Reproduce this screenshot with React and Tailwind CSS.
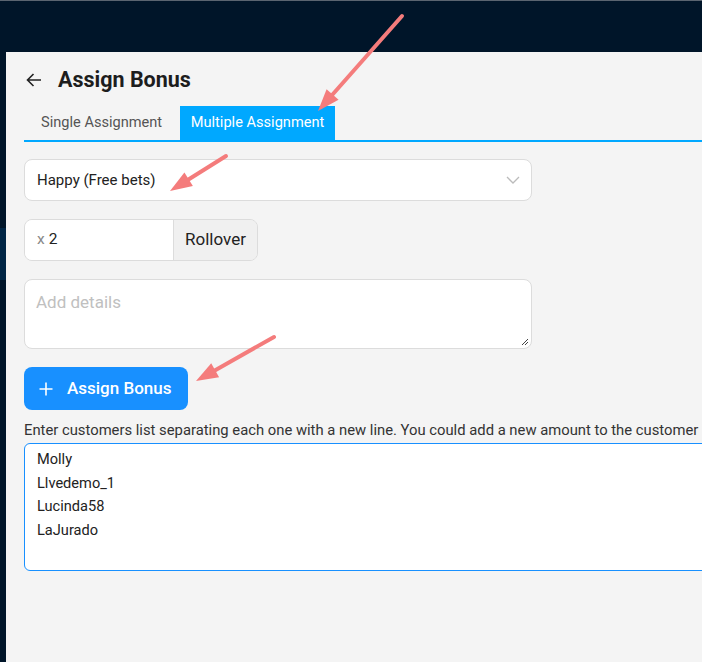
import React from "react";

function Arrow({ x1, y1, x2, y2 }) {
  const dx = x2 - x1;
  const dy = y2 - y1;
  const len = Math.sqrt(dx * dx + dy * dy);
  const ux = dx / len;
  const uy = dy / len;
  const hl = 22;
  const hw = 8;
  const bx = x2 - ux * hl;
  const by = y2 - uy * hl;
  const px = -uy;
  const py = ux;
  const pts = `${x2},${y2} ${bx + px * hw},${by + py * hw} ${bx - px * hw},${by - py * hw}`;
  return (
    <g>
      <line x1={x1} y1={y1} x2={bx + ux * 4} y2={by + uy * 4} stroke="#f47c7c" strokeWidth="4" strokeLinecap="round" />
      <polygon points={pts} fill="#f47c7c" />
    </g>
  );
}

export default function App() {
  return (
    <div className="relative w-[702px] h-[662px] overflow-hidden bg-[#001529]" style={{ fontFamily: "Roboto, 'Liberation Sans', sans-serif" }}>
      <div className="h-px bg-[#5a6470]" />
      <div className="flex h-[661px]">
        <div className="w-[6px] shrink-0 flex flex-col">
          <div className="h-[227px]" />
          <div className="h-[52px] bg-[#002545]" />
        </div>
        <div className="flex-1 flex flex-col">
          <div className="h-[51px] shrink-0" />
          <div className="flex-1 bg-[#f4f4f4] overflow-hidden pl-[18px]">
            <div className="flex items-center h-[54px] pt-[2px]">
              <svg width="18" height="18" viewBox="0 0 18 18" className="ml-[1px]">
                <path d="M16 9H2.5M8.5 3L2.5 9l6 6" fill="none" stroke="#222" strokeWidth="1.6" />
              </svg>
              <span className="ml-[15px] text-[21.5px] font-bold text-[#1d1d1d]">Assign Bonus</span>
            </div>
            <div className="flex h-[34px] border-b-2 border-[#00a8ff] box-content">
              <div className="w-[156px] flex items-center pl-[17px] text-[14.6px] text-[#555]">Single Assignment</div>
              <div className="w-[155px] flex items-center justify-center bg-[#00a8ff] text-[14.6px] text-white">Multiple Assignment</div>
            </div>
            <div className="mt-[17px] w-[508px] h-[42px] bg-white border border-[#dcdcdc] rounded-[8px] flex items-center justify-between pl-[12px] pr-[11px]">
              <span className="text-[15px] text-[#222]">Happy (Free bets)</span>
              <svg width="14" height="9" viewBox="0 0 14 9">
                <path d="M1 1l6 6 6-6" fill="none" stroke="#bbb" strokeWidth="1.3" />
              </svg>
            </div>
            <div className="mt-[18px] flex w-[234px] h-[42px] border border-[#dcdcdc] rounded-[8px] overflow-hidden">
              <div className="w-[148px] bg-white flex items-center pl-[12px] text-[15.5px]">
                <span className="text-[#888]">x</span>
                <span className="ml-[4px] text-[#222]">2</span>
              </div>
              <div className="flex-1 bg-[#f0f0f0] border-l border-[#dcdcdc] flex items-center justify-center text-[17px] text-[#222]">Rollover</div>
            </div>
            <div className="mt-[18px] relative w-[508px] h-[70px] bg-white border border-[#dcdcdc] rounded-[8px] px-[11px] pt-[10px]">
              <span className="text-[17px] text-[#c0c0c0]">Add details</span>
              <svg width="8" height="8" viewBox="0 0 8 8" className="absolute right-[2px] bottom-[2px]">
                <path d="M7 1L1 7M7 4L4 7" stroke="#444" strokeWidth="1" />
              </svg>
            </div>
            <button className="mt-[18px] w-[164px] h-[43px] bg-[#1890ff] rounded-[8px] flex items-center pl-[15px] text-white text-[17px] font-medium">
              <svg width="14" height="14" viewBox="0 0 14 14">
                <path d="M7 0.5v13M0.5 7h13" stroke="#fff" strokeWidth="1.6" />
              </svg>
              <span className="ml-[14px]">Assign Bonus</span>
            </button>
            <div className="mt-[12px] whitespace-nowrap text-[14.8px] text-[#333] leading-[16px]">
              Enter customers list separating each one with a new line. You could add a new amount to the customer each one with a comma.
            </div>
            <div className="mt-[5px] w-[900px] h-[128px] bg-white border border-[#1890ff] rounded-[6px] pl-[12px] pt-[4px] text-[14.6px] text-[#222] leading-[23.6px]">
              <div>Molly</div>
              <div>Llvedemo_1</div>
              <div>Lucinda58</div>
              <div>LaJurado</div>
            </div>
          </div>
        </div>
      </div>
      <svg className="absolute inset-0 pointer-events-none" width="702" height="662">
        <Arrow x1={402} y1={16} x2={318} y2={111} />
        <Arrow x1={226} y1={156} x2={170} y2={191} />
        <Arrow x1={274} y1={337} x2={196} y2={381} />
      </svg>
    </div>
  );
}
